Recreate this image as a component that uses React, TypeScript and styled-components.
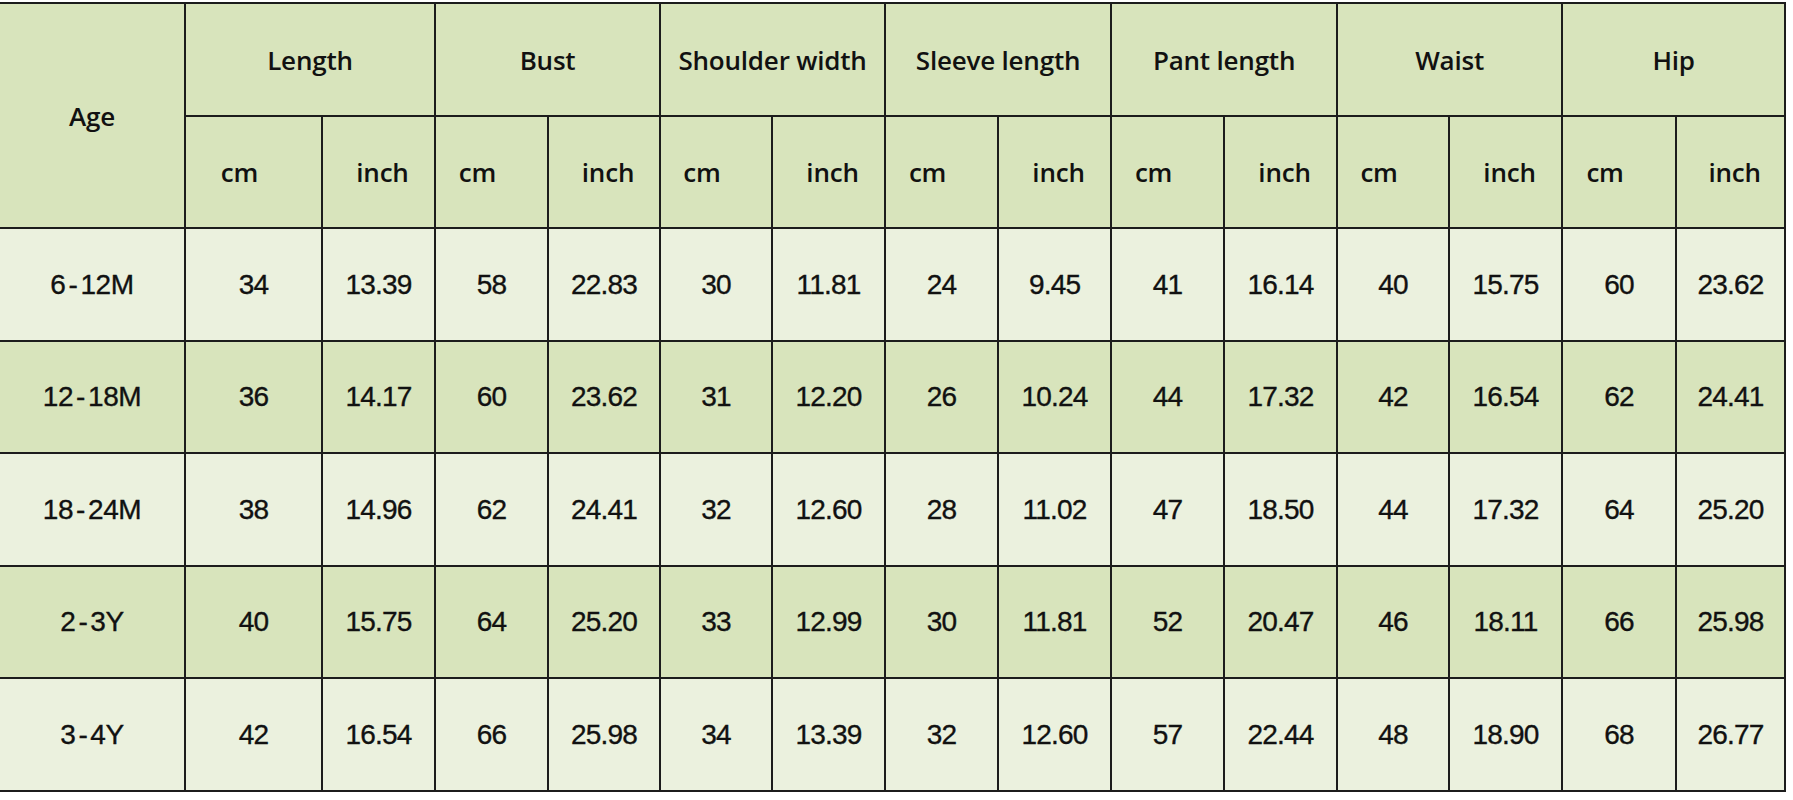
import React from "react";
import styled, { createGlobalStyle } from "styled-components";

const GlobalStyle = createGlobalStyle`
  html, body {
    margin: 0;
    padding: 0;
    background: #ffffff;
  }
  body {
    font-family: "Liberation Sans", Arial, sans-serif;
  }
`;

const Page = styled.div`
  padding-top: 2px;
  width: 1793px;
  height: 798px;
  background: #ffffff;
  overflow: hidden;
`;

const Table = styled.table`
  border-collapse: collapse;
  table-layout: fixed;
  width: 1785px;
  color: #111111;
`;

const HeadRow = styled.tr<{ $h: number }>`
  height: ${(p) => p.$h}px;
  background: #d8e4bc;
`;

const BodyRow = styled.tr<{ $h: number; $green: boolean }>`
  height: ${(p) => p.$h}px;
  background: ${(p) => (p.$green ? "#d8e4bc" : "#ebf1de")};
`;

const cellBorder = `
  border: 2px solid #1c1c1c;
  padding: 0;
  text-align: center;
  vertical-align: middle;
`;

const headFont = `
  font-family: "Open Sans", "Noto Sans", sans-serif;
  font-weight: 600;
  font-size: 26px;
  letter-spacing: -0.2px;
`;

const HeadCell = styled.th`
  ${cellBorder}
  ${headFont}
  &:first-child {
    border-left: none;
  }
`;

const UnitCell = styled.th<{ $unit: "cm" | "inch" }>`
  ${cellBorder}
  ${headFont}
  padding-right: ${(p) => (p.$unit === "cm" ? "28px" : "0")};
  padding-left: ${(p) => (p.$unit === "inch" ? "8px" : "0")};
`;

const numFont = `
  font-family: "Liberation Sans", Arial, sans-serif;
  font-size: 28px;
  -webkit-text-stroke: 0.35px #111111;
`;

const AgeCell = styled.td`
  ${cellBorder}
  ${numFont}
  border-left: none;
  letter-spacing: -0.4px;
`;

const Dash = styled.span`
  display: inline-block;
  margin: 0 3px;
`;

const NumCell = styled.td`
  ${cellBorder}
  ${numFont}
  letter-spacing: -0.8px;
`;

const colWidths = [185, 137, 113, 113, 112, 112, 113, 113, 113, 113, 113, 112, 113, 114, 109];

const groups = [
  "Length",
  "Bust",
  "Shoulder width",
  "Sleeve length",
  "Pant length",
  "Waist",
  "Hip",
];

const rows: { age: string; values: string[] }[] = [
  {
    age: "6-12M",
    values: ["34", "13.39", "58", "22.83", "30", "11.81", "24", "9.45", "41", "16.14", "40", "15.75", "60", "23.62"],
  },
  {
    age: "12-18M",
    values: ["36", "14.17", "60", "23.62", "31", "12.20", "26", "10.24", "44", "17.32", "42", "16.54", "62", "24.41"],
  },
  {
    age: "18-24M",
    values: ["38", "14.96", "62", "24.41", "32", "12.60", "28", "11.02", "47", "18.50", "44", "17.32", "64", "25.20"],
  },
  {
    age: "2-3Y",
    values: ["40", "15.75", "64", "25.20", "33", "12.99", "30", "11.81", "52", "20.47", "46", "18.11", "66", "25.98"],
  },
  {
    age: "3-4Y",
    values: ["42", "16.54", "66", "25.98", "34", "13.39", "32", "12.60", "57", "22.44", "48", "18.90", "68", "26.77"],
  },
];

const rowHeights = [113, 112, 113, 112, 113];

function AgeLabel({ text }: { text: string }) {
  const [a, b] = text.split("-");
  return (
    <>
      {a}
      <Dash>-</Dash>
      {b}
    </>
  );
}

export default function App() {
  return (
    <>
      <GlobalStyle />
      <Page>
        <Table>
          <colgroup>
            {colWidths.map((w, i) => (
              <col key={i} style={{ width: w }} />
            ))}
          </colgroup>
          <thead>
            <HeadRow $h={113}>
              <HeadCell rowSpan={2}>Age</HeadCell>
              {groups.map((g) => (
                <HeadCell key={g} colSpan={2}>
                  {g}
                </HeadCell>
              ))}
            </HeadRow>
            <HeadRow $h={112}>
              {groups.map((g) => (
                <React.Fragment key={g}>
                  <UnitCell $unit="cm">cm</UnitCell>
                  <UnitCell $unit="inch">inch</UnitCell>
                </React.Fragment>
              ))}
            </HeadRow>
          </thead>
          <tbody>
            {rows.map((r, i) => (
              <BodyRow key={r.age} $h={rowHeights[i]} $green={i % 2 === 1}>
                <AgeCell>
                  <AgeLabel text={r.age} />
                </AgeCell>
                {r.values.map((v, j) => (
                  <NumCell key={j}>{v}</NumCell>
                ))}
              </BodyRow>
            ))}
          </tbody>
        </Table>
      </Page>
    </>
  );
}
